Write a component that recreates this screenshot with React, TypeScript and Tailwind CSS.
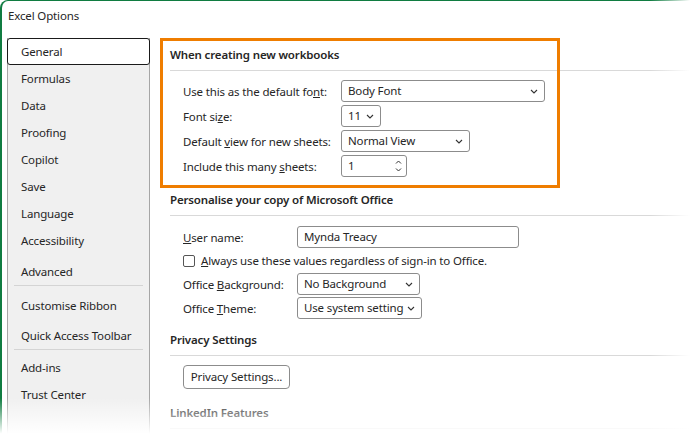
import React from 'react';

const sideItems = [
  { label: 'General', h: 'h-[27px] pt-[1px]', selected: true },
  { label: 'Formulas', h: 'h-[27px] pt-[1px]' },
  { label: 'Data', h: 'h-[27px] pt-[1px]' },
  { label: 'Proofing', h: 'h-[27px] pt-[1px]' },
  { label: 'Copilot', h: 'h-[27px] pt-[1px]' },
  { label: 'Save', h: 'h-[27px] pt-[1px]' },
  { label: 'Language', h: 'h-[27px] pt-[1px]' },
  { label: 'Accessibility', h: 'h-[27px] pt-[1px]' },
  { label: 'Advanced', h: 'h-[31px] pt-[5px]' },
  { sep: true },
  { label: 'Customise Ribbon', h: 'h-[32px] pt-[7px]' },
  { label: 'Quick Access Toolbar', h: 'h-[31px] pt-[5px]' },
  { sep: true },
  { label: 'Add-ins', h: 'h-[31px] pt-[5px]' },
  { label: 'Trust Center', h: 'h-[27px] pt-[1px]' },
];

function Chevron() {
  return (
    <svg width="8" height="5" viewBox="0 0 8 5" className="shrink-0">
      <path d="M1 1l3 3 3-3" fill="none" stroke="#333" strokeWidth="1.1" />
    </svg>
  );
}

function Select({ value, w }: { value: string; w: string }) {
  return (
    <div className={`${w} h-[22px] flex items-center justify-between pl-[6px] pr-[6px] border border-[#8c8c8c] rounded-[3px] bg-white whitespace-nowrap`}>
      <span>{value}</span>
      <Chevron />
    </div>
  );
}

function Heading({ children, className }: { children: React.ReactNode; className?: string }) {
  return (
    <div className={className}>
      <div className="h-[16px] leading-[16px] font-semibold text-[#262626] whitespace-nowrap">{children}</div>
      <div className="mt-[7px] h-px bg-[#d9d9d9]" />
    </div>
  );
}

function Row({ label, lw, children }: { label: React.ReactNode; lw: string; children: React.ReactNode }) {
  return (
    <div className="flex items-center h-[22px]">
      <div className={`${lw} shrink-0 whitespace-nowrap pt-[1px]`}>{label}</div>
      {children}
    </div>
  );
}

export default function App() {
  return (
    <div
      className="relative w-[690px] h-[440px] overflow-hidden bg-white text-[11.5px] tracking-[-0.15px] text-[#262626]"
      style={{ fontFamily: '"Noto Sans", "Open Sans", sans-serif' }}
    >
      <div className="h-full border-l-2 border-t border-[#107c41] rounded-tl-[8px]">
        <div className="h-[37px] pl-[6px] pt-[7px] leading-[16px]">Excel Options</div>
        <div className="flex h-[403px]">
          {/* sidebar */}
          <div className="ml-[5px] w-[143px] shrink-0 bg-[#f0f0f0] border-x border-[#a6a6a6] h-full">
            {sideItems.map((it, i) =>
              it.sep ? (
                <div key={i} className="mx-[6px] h-px bg-[#d4d4d4]" />
              ) : (
                <div
                  key={i}
                  className={`${it.h} flex items-center pl-[13px] whitespace-nowrap ${
                    it.selected ? 'bg-white border-[1.5px] border-[#1a1a1a] rounded-[3px] -mx-px' : ''
                  }`}
                >
                  {it.label}
                </div>
              )
            )}
          </div>

          {/* content */}
          <div className="relative flex-1 pl-[20px]">
            <Heading className="pt-[9px]">When creating new workbooks</Heading>
            <div className="mt-[9px] pl-[13px] flex flex-col gap-[3px]">
              <Row lw="w-[158px]" label={<>Use this as the default fo<span className="underline">n</span>t:</>}>
                <Select value="Body Font" w="w-[204px]" />
              </Row>
              <Row lw="w-[158px]" label={<>Font si<span className="underline">z</span>e:</>}>
                <Select value="11" w="w-[40px]" />
              </Row>
              <Row lw="w-[158px]" label={<>Default <span className="underline">v</span>iew for new sheets:</>}>
                <Select value="Normal View" w="w-[129px]" />
              </Row>
              <Row lw="w-[158px]" label={<>Include this many <span className="underline">s</span>heets:</>}>
                <div className="w-[66px] h-[22px] flex items-center justify-between pl-[6px] pr-[4px] border border-[#8c8c8c] rounded-[3px] bg-white">
                  <span>1</span>
                  <div className="flex flex-col gap-[4px]">
                    <svg width="7" height="4" viewBox="0 0 7 4">
                      <path d="M1 3.5l2.5-2.5 2.5 2.5" fill="none" stroke="#333" strokeWidth="1" />
                    </svg>
                    <svg width="7" height="4" viewBox="0 0 7 4">
                      <path d="M1 0.5l2.5 2.5 2.5-2.5" fill="none" stroke="#333" strokeWidth="1" />
                    </svg>
                  </div>
                </div>
              </Row>
            </div>

            <Heading className="mt-[15px]">Personalise your copy of Microsoft Office</Heading>
            <div className="mt-[10px] pl-[13px] flex flex-col gap-[2px]">
              <Row lw="w-[114px]" label={<><span className="underline">U</span>ser name:</>}>
                <div className="w-[222px] h-[22px] flex items-center pl-[6px] border border-[#8c8c8c] rounded-[3px] bg-white">
                  Mynda Treacy
                </div>
              </Row>
              <div className="flex items-center h-[21px] gap-[6px] whitespace-nowrap">
                <div className="w-[12px] h-[12px] border border-[#555] rounded-[2px] bg-white" />
                <span>
                  <span className="underline">A</span>lways use these values regardless of sign-in to Office.
                </span>
              </div>
              <Row lw="w-[114px]" label={<>Office <span className="underline">B</span>ackground:</>}>
                <Select value="No Background" w="w-[123px]" />
              </Row>
              <Row lw="w-[114px]" label={<>Office <span className="underline">T</span>heme:</>}>
                <Select value="Use system setting" w="w-[125px]" />
              </Row>
            </div>

            <Heading className="mt-[13px]">Privacy Settings</Heading>
            <div className="mt-[9px] pl-[13px]">
              <div className="w-[107px] h-[24px] flex items-center justify-center border border-[#8c8c8c] rounded-[4px] bg-white whitespace-nowrap">
                Privacy Settings...
              </div>
            </div>

            <Heading className="mt-[16px]">LinkedIn Features</Heading>

            {/* orange highlight annotation */}
            <div className="absolute left-[10px] top-0 w-[400px] h-[150px] border-[3px] border-[#ef7d00] pointer-events-none" />
          </div>
        </div>
      </div>

      {/* edge fades */}
      <div className="absolute right-0 top-0 h-full w-[40px] bg-gradient-to-r from-white/0 to-white pointer-events-none" />
      <div className="absolute left-0 bottom-0 w-full h-[42px] bg-[linear-gradient(to_bottom,rgba(255,255,255,0),#fff_85%)] pointer-events-none" />
    </div>
  );
}
